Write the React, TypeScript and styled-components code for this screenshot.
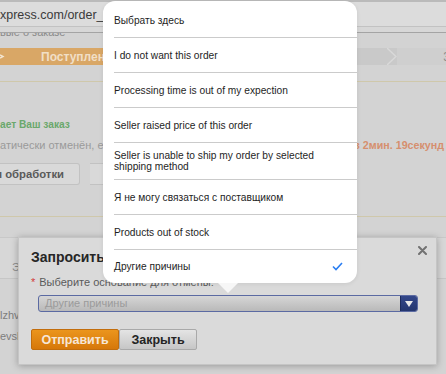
import React from "react";
import styled, { createGlobalStyle } from "styled-components";

const GlobalStyle = createGlobalStyle`
  html, body { margin: 0; padding: 0; background: #d3d3d3; }
  body { font-family: "Liberation Sans", Arial, Helvetica, sans-serif; }
  * { box-sizing: border-box; }
`;

const Page = styled.div`
  position: relative;
  width: 446px;
  height: 374px;
  overflow: hidden;
  background: #d3d3d3;
  font-family: "Liberation Sans", Arial, Helvetica, sans-serif;
`;

const AddressBar = styled.div`
  height: 33px;
  border-top: 2px solid #bababa;
  border-bottom: 1px solid #a4a4a4;
  background: linear-gradient(#dcdcdc 0 24px, #c2c2c2 24px 25px, #d7d7d7 25px);
`;

const Url = styled.div`
  font-size: 12.5px;
  line-height: 26px;
  color: #3a3a3a;
  white-space: nowrap;
`;

const Crumb = styled.div`
  height: 6px;
  overflow: hidden;
`;

const CrumbText = styled.div`
  margin-top: -7px;
  font-size: 11px;
  line-height: 12px;
  color: #8a8a8a;
  white-space: nowrap;
`;

const Steps = styled.div`
  display: flex;
  height: 17px;
  margin-top: 9px;
`;

const Step = styled.div<{ $tone: "done" | "todo" | "next"; $width: number }>`
  position: relative;
  display: flex;
  align-items: center;
  flex: 0 0 ${(p) => p.$width}px;
  background: ${(p) => (p.$tone === "done" ? "#d9a766" : p.$tone === "todo" ? "#c9c9c9" : "#cfcfcf")};
  color: ${(p) => (p.$tone === "done" ? "#f1dfc6" : "#8c8c8c")};
  font-size: 12px;
  font-weight: bold;
  white-space: nowrap;
`;

const StepLabel = styled.span<{ $indent: number }>`
  padding-left: ${(p) => p.$indent}px;
`;

const StepNum = styled.span`
  margin-left: auto;
  margin-right: -4px;
  font-weight: normal;
  font-size: 12px;
  color: #8c8c8c;
`;

const Chevron = styled.svg<{ $push?: boolean }>`
  flex: 0 0 auto;
  display: block;
  margin-left: ${(p) => (p.$push ? "auto" : "0")};
`;

const Divider = styled.div<{ $gap: number }>`
  height: 1px;
  margin-top: ${(p) => p.$gap}px;
  background: #cfc8ab;
`;

const Status = styled.div`
  margin-top: 35px;
  font-size: 10.2px;
  line-height: 16px;
  font-weight: bold;
  color: #6aa86c;
  white-space: nowrap;
`;

const NoteRow = styled.div`
  display: flex;
  justify-content: space-between;
  margin-top: 4px;
  line-height: 16px;
  white-space: nowrap;
`;

const Note = styled.span`
  font-size: 11px;
  color: #9a9a9a;
`;

const Timer = styled.span`
  font-size: 10.7px;
  font-weight: bold;
  color: #d68f6e;
  margin-right: 2px;
`;

const ActionRow = styled.div`
  display: flex;
  gap: 10px;
  margin-top: 10px;
  height: 22px;
`;

const GhostButton = styled.div<{ $width: number }>`
  width: ${(p) => p.$width}px;
  height: 22px;
  display: flex;
  align-items: center;
  justify-content: flex-end;
  padding-right: 15px;
  background: #d9d9d9;
  border: 1px solid #c2c2c2;
  border-left: none;
  border-radius: 0 3px 3px 0;
  font-size: 11.3px;
  font-weight: bold;
  color: #5a5a5a;
  white-space: nowrap;
  overflow: hidden;
`;

const Table = styled.div`
  margin-top: 20px;
`;

const TableHead = styled.div`
  height: 42px;
  display: flex;
  align-items: center;
  padding-left: 12px;
  padding-top: 18px;
  border-top: 1px solid #c8c8c8;
  border-bottom: 1px solid #c6c6c6;
  background: #d7d7d7;
  font-size: 11px;
  color: #8a8a8a;
`;

const TableRow = styled.div<{ $gap: number }>`
  margin-top: ${(p) => p.$gap}px;
  font-size: 11px;
  line-height: 14px;
  color: #7d7d7d;
  white-space: nowrap;
`;

/* ---------- modal ---------- */

const Modal = styled.div`
  position: absolute;
  left: 18px;
  top: 237px;
  width: 419px;
  height: 128px;
  background: #dadada;
  border: 1px solid #c5c5c5;
  box-shadow: 0 1px 7px rgba(0, 0, 0, 0.28);
  padding: 11px 12px 0 12px;
`;

const ModalTitle = styled.div`
  font-size: 14px;
  line-height: 16px;
  font-weight: bold;
  color: #262626;
  white-space: nowrap;
`;

const CloseButton = styled.svg`
  position: absolute;
  right: 9px;
  top: 8px;
`;

const FieldLabel = styled.div`
  margin-top: 10px;
  font-size: 11px;
  line-height: 14px;
  color: #5a5a5a;
  white-space: nowrap;
`;

const Required = styled.span`
  color: #d23a3a;
  margin-right: 4px;
`;

const Select = styled.div`
  display: flex;
  margin-top: 6px;
  margin-left: 7px;
  width: 380px;
  height: 17px;
  border: 1px solid #5b6aa2;
  border-radius: 3px;
  overflow: hidden;
  background: linear-gradient(#d6d6d6, #b9b9b9);
`;

const SelectValue = styled.div`
  flex: 1;
  padding-left: 6px;
  font-size: 11px;
  line-height: 15px;
  color: #9b9b9b;
  white-space: nowrap;
`;

const SelectToggle = styled.div`
  flex: 0 0 17px;
  display: flex;
  align-items: center;
  justify-content: center;
  background: linear-gradient(#33478a, #24366f);
  border-left: 1px solid #1d2b5c;
`;

const ButtonRow = styled.div`
  display: flex;
  margin-top: 17px;
`;

const Button = styled.div<{ $primary?: boolean; $width: number }>`
  width: ${(p) => p.$width}px;
  height: 21px;
  display: flex;
  align-items: center;
  justify-content: center;
  font-size: 12.5px;
  font-weight: bold;
  border-radius: 2px;
  border: 1px solid ${(p) => (p.$primary ? "#c26d0c" : "#a9a9a9")};
  background: ${(p) =>
    p.$primary ? "linear-gradient(#eb951d, #d6780a)" : "linear-gradient(#e4e4e4, #c6c6c6)"};
  color: ${(p) => (p.$primary ? "#f6e6d6" : "#242424")};
  white-space: nowrap;
`;

/* ---------- popover ---------- */

const Popover = styled.div`
  position: absolute;
  left: 103px;
  top: 1px;
  width: 254px;
  padding-top: 2px;
  background: #ffffff;
  border-radius: 12px;
  box-shadow: 0 1px 4px rgba(0, 0, 0, 0.08);
  &::after {
    content: "";
    position: absolute;
    left: 115px;
    bottom: -10px;
    border-left: 10px solid transparent;
    border-right: 10px solid transparent;
    border-top: 10px solid #f7f7f7;
  }
`;

const Option = styled.div<{ $last?: boolean }>`
  display: flex;
  align-items: center;
  justify-content: space-between;
  min-height: ${(p) => (p.$last ? 33 : 35)}px;
  margin-left: 11px;
  padding: 7px 14px 7px 0;
  border-bottom: ${(p) => (p.$last ? "none" : "1px solid #cbcbcb")};
  font-size: 10.2px;
  line-height: 11px;
  color: #1e1e1e;
`;

const OptionText = styled.span`
  max-width: 205px;
`;

const reasons = [
  "Выбрать здесь",
  "I do not want this order",
  "Processing time is out of my expection",
  "Seller raised price of this order",
  "Seller is unable to ship my order by selected shipping method",
  "Я не могу связаться с поставщиком",
  "Products out of stock",
  "Другие причины",
];

export default function App() {
  const selected = reasons.length - 1;
  return (
    <Page>
      <GlobalStyle />
      <AddressBar>
        <Url>xpress.com/order_</Url>
      </AddressBar>
      <Crumb>
        <CrumbText>вые о заказе</CrumbText>
      </Crumb>
      <Steps>
        <Step $tone="done" $width={330}>
          <Chevron width="5" height="17" viewBox="0 0 5 17">
            <polyline points="0,7 3,8.5 0,10" fill="none" stroke="#f3e6d2" strokeWidth="1.4" />
          </Chevron>
          <StepLabel $indent={36}>Поступление оплаты</StepLabel>
        </Step>
        <Step $tone="todo" $width={67}>
          <Chevron $push width="10" height="17" viewBox="0 0 10 17">
            <polyline points="0,0 9,8.5 0,17" fill="none" stroke="#d9d9d9" strokeWidth="1.4" />
          </Chevron>
        </Step>
        <Step $tone="next" $width={49}>
          <StepNum>3</StepNum>
        </Step>
      </Steps>
      <Divider $gap={16} />
      <Status>ает Ваш заказ</Status>
      <NoteRow>
        <Note>атически отменён, если продавец не отправит его в течение</Note>
        <Timer>в 2мин. 19секунд</Timer>
      </NoteRow>
      <ActionRow>
        <GhostButton $width={80}>я обработки</GhostButton>
        <GhostButton $width={120}>Продлить</GhostButton>
      </ActionRow>
      <Divider $gap={31} />
      <Table>
        <TableHead>Э</TableHead>
        <TableRow $gap={29}>lzhv</TableRow>
        <TableRow $gap={7}>evsk</TableRow>
      </Table>

      <Modal>
        <ModalTitle>Запросить отмену</ModalTitle>
        <CloseButton width="9" height="9" viewBox="0 0 9 9">
          <path d="M1 1 L8 8 M8 1 L1 8" stroke="#727272" strokeWidth="2" strokeLinecap="round" />
        </CloseButton>
        <FieldLabel>
          <Required>*</Required>Выберите основание для отмены:
        </FieldLabel>
        <Select>
          <SelectValue>Другие причины</SelectValue>
          <SelectToggle>
            <svg width="8" height="6" viewBox="0 0 8 6">
              <path d="M0 0 H8 L4 6 Z" fill="#e8e8e8" />
            </svg>
          </SelectToggle>
        </Select>
        <ButtonRow>
          <Button $primary $width={88}>Отправить</Button>
          <Button $width={78}>Закрыть</Button>
        </ButtonRow>
      </Modal>

      <Popover>
        {reasons.map((r, i) => (
          <Option key={r} $last={i === reasons.length - 1}>
            <OptionText>{r}</OptionText>
            {i === selected && (
              <svg width="11" height="9" viewBox="0 0 11 9">
                <path d="M1 4.5 L4 7.5 L10 1" fill="none" stroke="#2a7ef2" strokeWidth="1.6" />
              </svg>
            )}
          </Option>
        ))}
      </Popover>
    </Page>
  );
}
